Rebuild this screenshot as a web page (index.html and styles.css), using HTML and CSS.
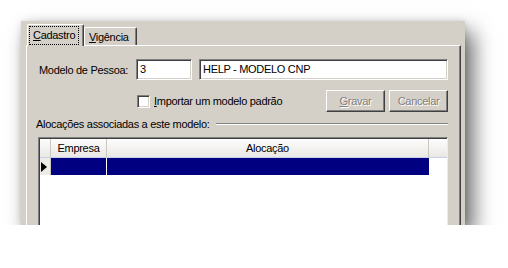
FILE: index.html
```html
<!DOCTYPE html>
<html lang="pt">
<head>
    <meta charset="UTF-8">
    <title>Modelo de Pessoa</title>
    <link rel="stylesheet" href="styles.css">
</head>
<body>
    <div class="window">
        <div class="tabs">
            <div class="tab active"><span class="focus"><u>C</u>adastro</span></div>
            <div class="tab"><span><u>V</u>igência</span></div>
        </div>

        <div class="sheet">
            <div class="row">
                <label class="caption">Modelo de Pessoa:</label>
                <div class="edit code">3</div>
                <div class="edit name">HELP - MODELO CNP</div>
            </div>

            <div class="row actions">
                <span class="check"></span>
                <span class="check-label"><u>I</u>mportar um modelo padrão</span>
                <div class="buttons">
                    <button class="btn" disabled><u>G</u>ravar</button>
                    <button class="btn" disabled>Cancelar</button>
                </div>
            </div>

            <div class="group">
                <span>Alocações associadas a este modelo:</span>
                <div class="etched"></div>
            </div>

            <div class="grid">
                <div class="grid-head">
                    <div class="cell ind"></div>
                    <div class="cell col-empresa">Empresa</div>
                    <div class="cell col-alocacao">Alocação</div>
                </div>
                <div class="grid-row">
                    <div class="cell ind"><span class="arrow"></span></div>
                    <div class="cell col-empresa selected"></div>
                    <div class="cell col-alocacao selected"></div>
                </div>
            </div>
        </div>
    </div>
</body>
</html>
```

FILE: styles.css
```css
body {
    margin: 0;
    padding: 21px 0 0 21px;
    background: #fff;
    font-family: "Liberation Sans", Arial, sans-serif;
    font-size: 11px;
    letter-spacing: -0.3px;
    color: #000;
}
.window {
    width: 444px;
    height: 204px;
    overflow: hidden;
    background: #d4d0c8;
    box-shadow: 8px 11px 20px rgba(0, 0, 0, 0.6), 0 0 6px rgba(0, 0, 0, 0.12);
}
u {
    text-decoration: underline;
}

/* tabs */
.tabs {
    display: flex;
    align-items: flex-end;
    padding: 3px 0 0 6px;
    height: 21px;
}
.tab {
    height: 17px;
    padding: 0 4px;
    display: flex;
    align-items: center;
    border-top: 1px solid #fff;
    border-left: 1px solid #fff;
    border-right: 1px solid #404040;
    border-radius: 2px 2px 0 0;
    box-shadow: inset -1px 0 #808080;
    width: 43px;
}
.tab.active {
    position: relative;
    z-index: 1;
    height: 21px;
    margin-bottom: -1px;
    background: #d4d0c8;
    width: 50px;
    padding: 0 4px 0 1px;
}
.focus {
    outline: 1px dotted #000;
    padding: 2px 3px 3px 3px;
    margin-left: 1px;
}

/* sheet */
.sheet {
    margin-left: 5px;
    width: 412px;
    height: 200px;
    padding: 13px 12px 0 9px;
    border-top: 1px solid #fff;
    border-left: 1px solid #fff;
    border-right: 1px solid #404040;
    box-shadow: inset -1px 0 #808080;
}
.row {
    display: flex;
    align-items: center;
}
.caption {
    width: 97px;
    margin-left: 3px;
}
.edit {
    height: 19px;
    line-height: 19px;
    padding-left: 3px;
    background: #fff;
    border: 1px solid;
    border-color: #808080 #fff #fff #808080;
    box-shadow: inset 1px 1px #404040, inset -1px -1px #d4d0c8;
}
.code {
    width: 51px;
}
.name {
    flex: 1;
    margin-left: 7px;
}

.actions {
    margin-top: 10px;
    height: 22px;
}
.check {
    width: 11px;
    height: 11px;
    margin-left: 101px;
    background: #fff;
    border: 1px solid;
    border-color: #808080 #fff #fff #808080;
    box-shadow: inset 1px 1px #404040, inset -1px -1px #d4d0c8;
}
.check-label {
    margin-left: 4px;
}
.buttons {
    margin-left: auto;
    display: flex;
    gap: 4px;
}
.btn {
    width: 59px;
    height: 22px;
    padding: 0;
    font-family: inherit;
    font-size: 11px;
    letter-spacing: -0.3px;
    color: #808080;
    text-shadow: 1px 1px #fff;
    background: #d4d0c8;
    border: 1px solid;
    border-color: #fff #404040 #404040 #fff;
    box-shadow: inset -1px -1px #808080;
}

.group {
    display: flex;
    align-items: center;
    margin-top: 5px;
    height: 14px;
}
.etched {
    flex: 1;
    margin-left: 6px;
    border-top: 1px solid #808080;
    border-bottom: 1px solid #fff;
}

/* grid */
.grid {
    margin: 6px 0 0 2px;
    height: 100px;
    background: #fff;
    border-top: 1px solid #808080;
    border-left: 1px solid #808080;
    border-right: 1px solid #ecebe6;
    box-shadow: inset 1px 1px #404040;
    padding: 1px 0 0 1px;
}
.grid-head,
.grid-row {
    display: flex;
}
.grid-head {
    height: 18px;
    border-bottom: 1px solid #c6d0e8;
    background: linear-gradient(#fdfdfd, #e9e8e4);
}
.grid-row {
    height: 17px;
}
.cell {
    box-sizing: border-box;
    border-right: 1px solid #c9c7c0;
    display: flex;
    align-items: center;
    justify-content: center;
}
.ind {
    width: 11px;
}
.grid-row .ind {
    background: #ecebe6;
    justify-content: flex-start;
    padding-left: 1px;
}
.col-empresa {
    width: 56px;
}
.col-alocacao {
    width: 322px;
}
.selected {
    background: #000080;
    border-right: 1px solid #fff;
}
.col-alocacao.selected {
    border-right: none;
}
.arrow {
    width: 0;
    height: 0;
    border-top: 5px solid transparent;
    border-bottom: 5px solid transparent;
    border-left: 6px solid #000;
}
```
